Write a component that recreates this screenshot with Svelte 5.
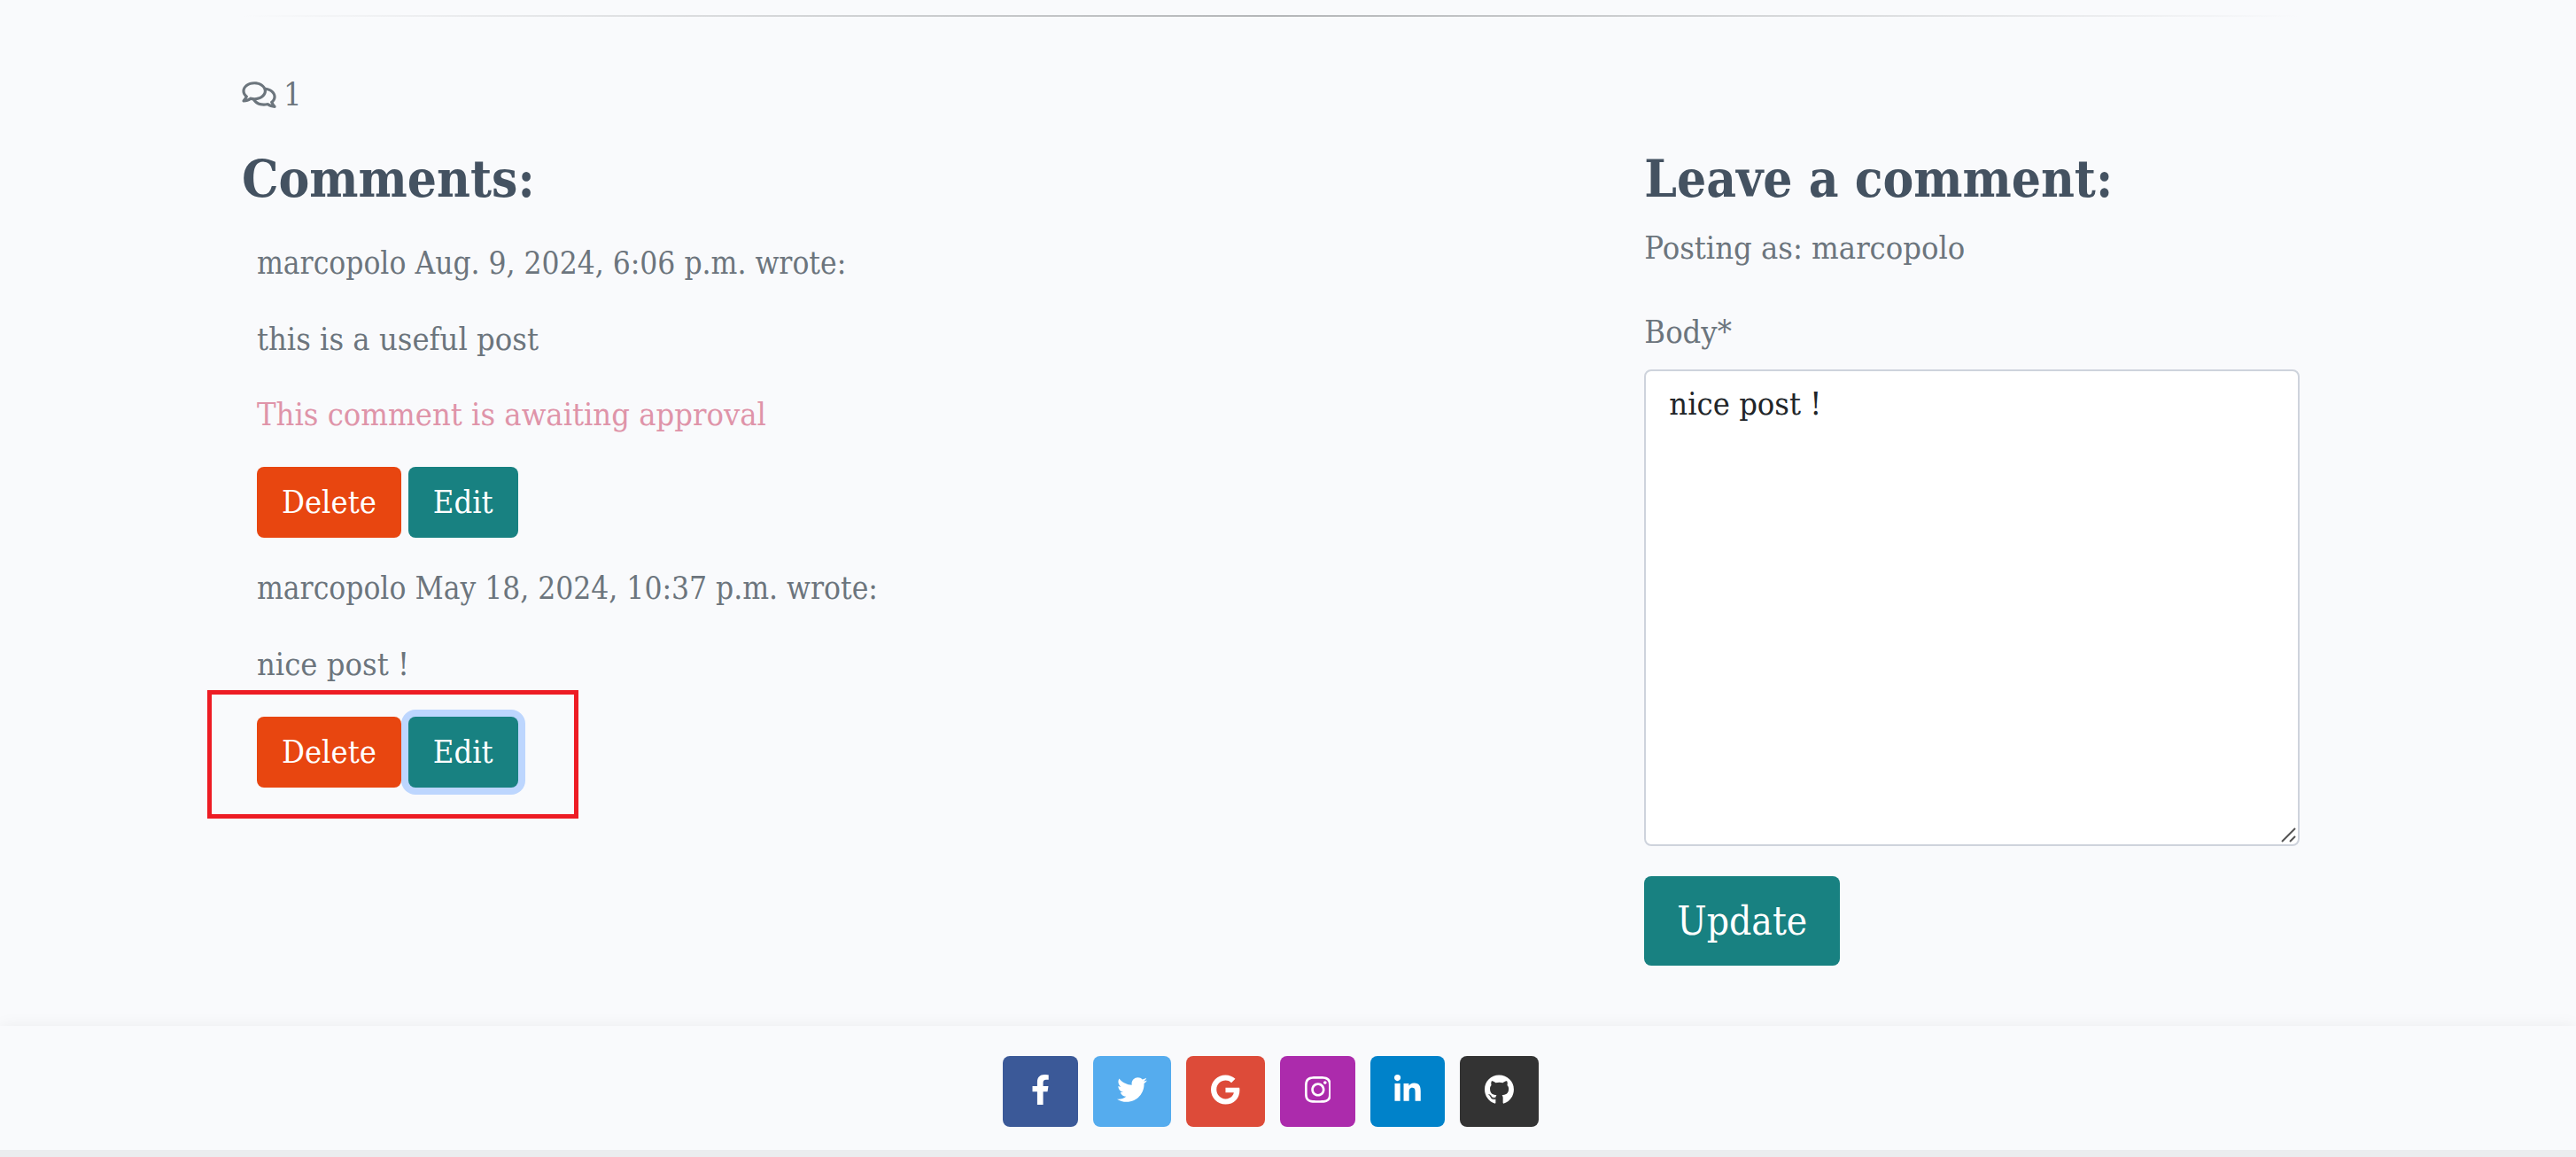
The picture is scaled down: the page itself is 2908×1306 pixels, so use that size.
<script>
  let comments = $state([
    { id: 1, author: 'marcopolo', date: 'Aug. 9, 2024, 6:06 p.m.', body: 'this is a useful post', approved: false, editing: false },
    { id: 2, author: 'marcopolo', date: 'May 18, 2024, 10:37 p.m.', body: 'nice post !', approved: true, editing: true }
  ]);
  let body = $state('nice post !');

  const socials = [
    { name: 'Facebook', key: 'facebook', view: '0 0 320 512', d: 'M279.14 288l14.22-92.66h-88.91v-60.13c0-25.35 12.42-50.06 52.24-50.06h40.42V6.26S260.43 0 225.36 0c-73.22 0-121.08 44.38-121.08 124.72v70.62H22.89V288h81.39v224h100.17V288z' },
    { name: 'Twitter', key: 'twitter', view: '0 0 512 512', d: 'M459.37 151.716c.325 4.548.325 9.097.325 13.645 0 138.72-105.583 298.558-298.558 298.558-59.452 0-114.68-17.219-161.137-47.106 8.447.974 16.568 1.299 25.34 1.299 49.055 0 94.213-16.568 130.274-44.832-46.132-.975-84.792-31.188-98.112-72.772 6.498.974 12.995 1.624 19.818 1.624 9.421 0 18.843-1.3 27.614-3.573-48.081-9.747-84.143-51.98-84.143-102.985v-1.299c13.969 7.797 30.214 12.67 47.431 13.319-28.264-18.843-46.781-51.005-46.781-87.391 0-19.492 5.197-37.36 14.294-52.954 51.655 63.675 129.3 105.258 216.365 109.807-1.624-7.797-2.599-15.918-2.599-24.04 0-57.828 46.782-104.934 104.934-104.934 30.213 0 57.502 12.67 76.67 33.137 23.715-4.548 46.456-13.32 66.599-25.34-7.798 24.366-24.366 44.833-46.132 57.827 21.117-2.273 41.584-8.122 60.426-16.243-14.292 20.791-32.161 39.308-52.628 54.253z' },
    { name: 'Google', key: 'google', view: '0 0 488 512', d: 'M488 261.8C488 403.3 391.1 504 248 504 110.8 504 0 393.2 0 256S110.8 8 248 8c66.8 0 123 24.5 166.3 64.9l-67.5 64.9C258.5 52.6 94.3 116.6 94.3 256c0 86.5 69.1 156.6 153.7 156.6 98.2 0 135-70.4 140.8-106.9H248v-85.3h236.1c2.3 12.7 3.9 24.9 3.9 41.4z' },
    { name: 'Instagram', key: 'instagram', view: '0 0 448 512', d: 'M224.1 141c-63.6 0-114.9 51.3-114.9 114.9s51.3 114.9 114.9 114.9S339 319.5 339 255.9 287.7 141 224.1 141zm0 189.6c-41.1 0-74.7-33.5-74.7-74.7s33.5-74.7 74.7-74.7 74.7 33.5 74.7 74.7-33.6 74.7-74.7 74.7zm146.4-194.3c0 14.9-12 26.8-26.8 26.8-14.9 0-26.8-12-26.8-26.8s12-26.8 26.8-26.8 26.8 12 26.8 26.8zm76.1 27.2c-1.7-35.9-9.9-67.7-36.2-93.9-26.2-26.2-58-34.4-93.9-36.2-37-2.1-147.9-2.1-184.9 0-35.8 1.7-67.6 9.9-93.9 36.1s-34.4 58-36.2 93.9c-2.1 37-2.1 147.9 0 184.9 1.7 35.9 9.9 67.7 36.2 93.9s58 34.4 93.9 36.2c37 2.1 147.9 2.1 184.9 0 35.9-1.7 67.7-9.9 93.9-36.2 26.2-26.2 34.4-58 36.2-93.9 2.1-37 2.1-147.8 0-184.8zM398.8 388c-7.8 19.6-22.9 34.7-42.6 42.6-29.5 11.7-99.5 9-132.1 9s-102.7 2.6-132.1-9c-19.6-7.8-34.7-22.9-42.6-42.6-11.7-29.5-9-99.5-9-132.1s-2.6-102.7 9-132.1c7.8-19.6 22.9-34.7 42.6-42.6 29.5-11.7 99.5-9 132.1-9s102.7-2.6 132.1 9c19.6 7.8 34.7 22.9 42.6 42.6 11.7 29.5 9 99.5 9 132.1s2.7 102.7-9 132.1z' },
    { name: 'LinkedIn', key: 'linkedin', view: '0 0 448 512', d: 'M100.28 448H7.4V148.9h92.88zM53.79 108.1C24.09 108.1 0 83.5 0 53.8a53.79 53.79 0 0 1 107.58 0c0 29.7-24.1 54.3-53.79 54.3zM447.9 448h-92.68V302.4c0-34.7-.7-79.2-48.29-79.2-48.29 0-55.69 37.7-55.69 76.7V448h-92.78V148.9h89.08v40.8h1.3c12.4-23.5 42.69-48.3 87.88-48.3 94 0 111.28 61.9 111.28 142.3V448z' },
    { name: 'GitHub', key: 'github', view: '0 0 496 512', d: 'M165.9 397.4c0 2-2.3 3.6-5.2 3.6-3.3.3-5.6-1.3-5.6-3.6 0-2 2.3-3.6 5.2-3.6 3-.3 5.6 1.3 5.6 3.6zm-31.1-4.5c-.7 2 1.3 4.3 4.3 4.9 2.6 1 5.6 0 6.2-2s-1.3-4.3-4.3-5.2c-2.6-.7-5.5.3-6.2 2.3zm44.2-1.7c-2.9.7-4.9 2.6-4.6 4.9.3 2 2.9 3.3 5.9 2.6 2.9-.7 4.9-2.6 4.6-4.6-.3-1.9-3-3.2-5.9-2.9zM244.8 8C106.1 8 0 113.3 0 252c0 110.9 69.8 205.8 169.5 239.2 12.8 2.3 17.3-5.6 17.3-12.1 0-6.2-.3-40.4-.3-61.4 0 0-70 15-84.7-29.8 0 0-11.4-29.1-27.8-36.6 0 0-22.9-15.7 1.6-15.4 0 0 24.9 2 38.6 25.8 21.9 38.6 58.6 27.5 72.9 20.9 2.3-16 8.8-27.1 16-33.7-55.9-6.2-112.3-14.3-112.3-110.5 0-27.5 7.6-41.3 23.6-58.9-2.6-6.5-11.1-33.3 2.6-67.9 20.9-6.5 69 27 69 27 20-5.6 41.5-8.5 62.8-8.5s42.8 2.9 62.8 8.5c0 0 48.1-33.6 69-27 13.7 34.7 5.2 61.4 2.6 67.9 16 17.7 25.8 31.5 25.8 58.9 0 96.5-58.9 104.2-114.8 110.5 9.2 7.9 17 22.9 17 46.4 0 33.7-.3 75.4-.3 83.6 0 6.5 4.6 14.4 17.3 12.1C428.2 457.8 496 362.9 496 252 496 113.3 383.5 8 244.8 8zM97.2 352.9c-1.3 1-1 3.3.7 5.2 1.6 1.6 3.9 2.3 5.2 1 1.3-1 1-3.3-.7-5.2-1.6-1.6-3.9-2.3-5.2-1zm-10.8-8.1c-.7 1.3.3 2.9 2.3 3.9 1.6 1 3.6.7 4.3-.7.7-1.3-.3-2.9-2.3-3.9-2-.6-3.6-.3-4.3.7zm32.4 35.6c-1.6 1.3-1 4.3 1.3 6.2 2.3 2.3 5.2 2.6 6.5 1 1.3-1.3.7-4.3-1.3-6.2-2.2-2.3-5.2-2.6-6.5-1zm-11.4-14.7c-1.6 1-1.6 3.6 0 5.9 1.6 2.3 4.3 3.3 5.6 2.3 1.6-1.3 1.6-3.9 0-6.2-1.4-2.3-4-3.3-5.6-2z' }
  ];
</script>

<div class="page">
  <main>
    <hr />
    <div class="count">
      <svg viewBox="0 0 576 512" aria-hidden="true"><path d="M532 386.200c27.500-27.100 44-61.100 44-98.200 0-80-76.500-146.100-176.200-157.900C368.300 72.500 294.300 32 208 32 93.100 32 0 103.600 0 192c0 37 16.500 71 44 98.200-15.300 30.700-37.300 54.500-37.700 54.900-6.300 6.700-8.100 16.500-4.400 25 3.600 8.500 12 14 21.200 14 53.500 0 96.700-20.200 125.200-38.800 9.200 2.100 18.700 3.700 28.400 4.900C208.100 407.600 281.800 448 368 448c20.800 0 40.800-2.400 59.800-6.800C456.300 459.700 499.400 480 553 480c9.200 0 17.500-5.500 21.200-14 3.600-8.500 1.900-18.300-4.400-25-.4-.3-22.500-24.100-37.800-54.800zm-392.800-92.300L122.100 305c-14.100 9.100-28.500 16.300-43.100 21.400 2.700-4.700 5.400-9.700 8-14.800l15.500-31.100L77.700 256C64.200 242.600 48 220.700 48 192c0-60.700 73.300-112 160-112s160 51.300 160 112-73.300 112-160 112c-16.500 0-33-1.900-49-5.600l-19.800-4.500zM498.300 352l-24.700 24.400 15.500 31.100c2.600 5.100 5.300 10.100 8 14.800-14.600-5.100-29-12.300-43.100-21.400l-17.100-11.100-19.900 4.600c-16 3.700-32.500 5.600-49 5.600-54 0-102.200-20.100-131.300-49.700C338 339.500 416 272.900 416 192c0-3.400-.4-6.700-.7-10C479.700 196.500 528 238.800 528 288c0 28.700-16.200 50.600-29.700 64z" /></svg>
      <span>1</span>
    </div>

    <div class="row">
      <section>
        <h2>Comments:</h2>
        <div class="list">
          {#each comments as comment (comment.id)}
            <article>
              <p class="meta">{comment.author} {comment.date} wrote:</p>
              <p>{comment.body}</p>
              {#if !comment.approved}
                <p class="pending">This comment is awaiting approval</p>
              {/if}
              <div class="actions" class:marked={comment.editing}>
                <button class="delete" type="button">Delete</button>
                <button class="edit" class:active={comment.editing} type="button">Edit</button>
              </div>
            </article>
          {/each}
        </div>
      </section>

      <section class="compose">
        <h2>Leave a comment:</h2>
        <p>Posting as: marcopolo</p>
        <form onsubmit={(e) => e.preventDefault()}>
          <label for="body">Body*</label>
          <div class="field">
            <textarea id="body" rows="10" required bind:value={body}></textarea>
            <svg class="grip" viewBox="0 0 18 18" aria-hidden="true"><path d="M2 17 17 2M11 17l6-6" /></svg>
          </div>
          <button class="update" type="submit">Update</button>
        </form>
      </section>
    </div>
  </main>

  <footer>
    <nav aria-label="Social media">
      {#each socials as s (s.key)}
        <a class={s.key} href={`#${s.key}`} aria-label={s.name}>
          <svg viewBox={s.view} aria-hidden="true"><path d={s.d} /></svg>
        </a>
      {/each}
    </nav>
  </footer>
</div>

<style>
  :global(body) {
    margin: 0;
    background: #f9fafc;
  }

  .page {
    overflow: hidden;
    padding-right: 39px;
    color: #6c757d;
    font-family: 'DejaVu Serif Condensed', 'DejaVu Serif', serif;
    font-size: 36px;
    line-height: 51px;
  }

  main {
    box-sizing: border-box;
    max-width: 2375px;
    margin: 0 auto;
    padding: 17px 26px 68px;
  }

  hr {
    height: 2px;
    margin: 0 0 62px;
    border: 0;
    background: linear-gradient(90deg, transparent, #b4b6b8, transparent);
  }

  .count {
    display: flex;
    align-items: center;
    gap: 8px;
    margin-bottom: 34px;
  }

  .count svg {
    width: 39px;
    height: 34px;
    fill: currentColor;
  }

  .row {
    display: grid;
    grid-template-columns: minmax(0, 2fr) minmax(0, 1fr);
    margin: 0 -26px;
  }

  section {
    padding: 0 26px;
  }

  h2 {
    margin: 0;
    color: #445261;
    font-size: 58px;
    font-weight: 700;
    line-height: 72px;
  }

  p {
    margin: 0;
  }

  .list {
    display: flex;
    flex-direction: column;
    gap: 32px;
    padding: 34px 17px 0;
  }

  article {
    display: flex;
    flex-direction: column;
    gap: 34px;
  }

  .meta {
    font-size: 35px;
  }

  .pending {
    color: #df94a9;
  }

  .actions {
    display: flex;
    gap: 8px;
    position: relative;
    width: fit-content;
  }

  .marked::after {
    content: '';
    position: absolute;
    inset: -30px -68px -35px -56px;
    border: 5px solid #ed1c24;
    pointer-events: none;
  }

  button {
    border: 0;
    border-radius: 8px;
    color: #fff;
    font: inherit;
    cursor: pointer;
  }

  .actions button {
    padding: 14px 28px 15px;
  }

  .delete {
    position: relative;
    z-index: 1;
    background: #e84610;
  }

  .edit,
  .update {
    background: #188181;
  }

  .edit.active {
    box-shadow: 0 0 0 8px #bdd6fe;
  }

  .compose p {
    margin: 16px 0 44px;
  }

  form {
    display: flex;
    flex-direction: column;
    align-items: flex-start;
  }

  label {
    margin-bottom: 17px;
  }

  .field {
    display: flex;
    position: relative;
    width: 100%;
    margin-bottom: 34px;
  }

  textarea {
    box-sizing: border-box;
    width: 100%;
    height: 538px;
    padding: 11px 26px;
    border: 2px solid #ced3dc;
    border-radius: 8px;
    background: #fff;
    color: #212529;
    font: inherit;
    resize: vertical;
  }

  textarea::-webkit-resizer {
    display: none;
  }

  .grip {
    position: absolute;
    right: 4px;
    bottom: 4px;
    width: 18px;
    height: 18px;
    fill: none;
    stroke: #555;
    stroke-width: 2;
    pointer-events: none;
  }

  .update {
    padding: 18px 37px;
    font-size: 44px;
    line-height: 65px;
  }

  footer {
    position: relative;
    margin-right: -39px;
    padding: 34px 39px 26px 0;
    border-bottom: 8px solid #ebedef;
    background: #f9fafc;
    box-shadow: 0 0 17px rgba(0, 0, 0, 0.06);
  }

  nav {
    display: flex;
    justify-content: center;
    gap: 17px;
  }

  nav a {
    display: flex;
    align-items: center;
    justify-content: center;
    box-sizing: border-box;
    height: 80px;
    padding: 0 28px;
    border-radius: 8px;
  }

  nav svg {
    height: 34px;
    margin-bottom: 4px;
    fill: #fff;
  }

  .facebook { padding: 0 32px; background: #3b5998; }
  .twitter { padding: 0 27px; background: #55acee; }
  .google { background: #dd4b39; }
  .instagram { background: #ac2bac; }
  .linkedin { padding: 0 27px; background: #0082ca; }
  .github { background: #333333; }
</style>
